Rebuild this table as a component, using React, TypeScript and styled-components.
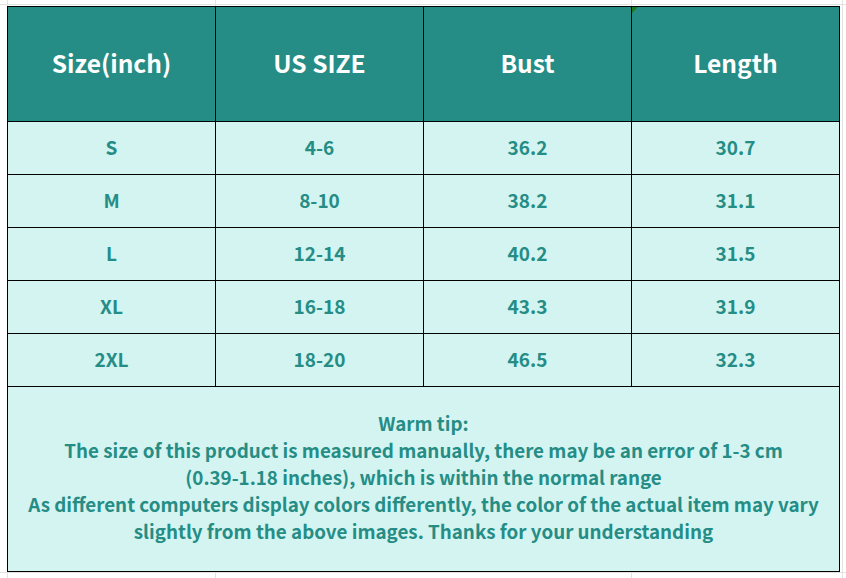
import { FC } from "react";
import styled, { createGlobalStyle } from "styled-components";

const GlobalStyle = createGlobalStyle`
  html, body {
    margin: 0;
    padding: 0;
    background: #ffffff;
  }
  body {
    font-family: "Noto Sans CJK KR", "Noto Sans", sans-serif;
  }
`;

// faint spreadsheet gridlines behind the table
const Sheet = styled.div`
  width: 846px;
  height: 578px;
  box-sizing: border-box;
  padding: 6px 0 0 7px;
  background-color: #ffffff;
  background-image:
    linear-gradient(to right, transparent 7px, #e2e2e2 7px, #e2e2e2 8px, transparent 8px),
    linear-gradient(to right, transparent 215px, #e2e2e2 215px, #e2e2e2 216px, transparent 216px),
    linear-gradient(to right, transparent 631px, #e2e2e2 631px, #e2e2e2 632px, transparent 632px),
    linear-gradient(to right, transparent 842px, #e2e2e2 842px, #e2e2e2 843px, transparent 843px),
    linear-gradient(to bottom, transparent 4px, #e2e2e2 4px, #e2e2e2 5px, transparent 5px),
    linear-gradient(to bottom, transparent 572px, #e2e2e2 572px, #e2e2e2 573px, transparent 573px);
`;

const Table = styled.table`
  border-collapse: collapse;
  table-layout: fixed;
  width: 833px;
  border: 1.5px solid #000;
`;

const HeadCell = styled.th`
  position: relative;
  height: 110px;
  padding: 0 0 4px;
  background: #258d85;
  color: #ffffff;
  font-size: 24.5px;
  font-weight: 700;
  border: 1px solid #000;
  text-align: center;
`;

const Cell = styled.td`
  height: 49px;
  padding: 0 0 3px;
  background: #d3f4f1;
  color: #258d85;
  font-size: 19px;
  font-weight: 700;
  border: 1px solid #000;
  text-align: center;
`;

const NoteCell = styled.td`
  height: 178px;
  padding: 0 8px 6px;
  background: #d3f4f1;
  color: #258d85;
  font-size: 18.8px;
  font-weight: 700;
  line-height: 27px;
  border: 1px solid #000;
  text-align: center;
`;

const Marker = styled.span`
  position: absolute;
  left: 0;
  top: 0;
  width: 0;
  height: 0;
  border-top: 6px solid #1e7a1e;
  border-right: 6px solid transparent;
`;

interface Row {
  size: string;
  us: string;
  bust: string;
  length: string;
}

const rows: Row[] = [
  { size: "S", us: "4-6", bust: "36.2", length: "30.7" },
  { size: "M", us: "8-10", bust: "38.2", length: "31.1" },
  { size: "L", us: "12-14", bust: "40.2", length: "31.5" },
  { size: "XL", us: "16-18", bust: "43.3", length: "31.9" },
  { size: "2XL", us: "18-20", bust: "46.5", length: "32.3" },
];

const App: FC = () => {
  return (
    <>
      <GlobalStyle />
      <Sheet>
        <Table>
          <thead>
            <tr>
              <HeadCell>Size(inch)</HeadCell>
              <HeadCell>US SIZE</HeadCell>
              <HeadCell>Bust</HeadCell>
              <HeadCell>
                <Marker />
                Length
              </HeadCell>
            </tr>
          </thead>
          <tbody>
            {rows.map((row) => (
              <tr key={row.size}>
                <Cell>{row.size}</Cell>
                <Cell>{row.us}</Cell>
                <Cell>{row.bust}</Cell>
                <Cell>{row.length}</Cell>
              </tr>
            ))}
            <tr>
              <NoteCell colSpan={4}>
                Warm tip:
                <br />
                The size of this product is measured manually, there may be an error of 1-3 cm
                <br />
                (0.39-1.18 inches), which is within the normal range
                <br />
                As different computers display colors differently, the color of the actual item may vary
                <br />
                slightly from the above images. Thanks for your understanding
              </NoteCell>
            </tr>
          </tbody>
        </Table>
      </Sheet>
    </>
  );
};

export default App;
